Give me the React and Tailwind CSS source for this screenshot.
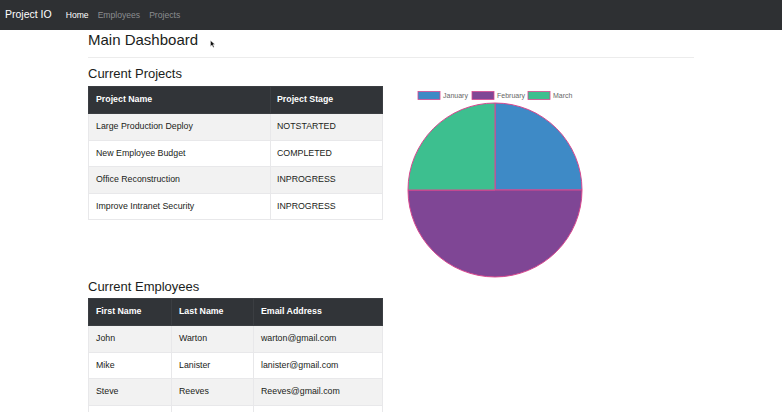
import React from 'react'

const projects = [
  { name: 'Large Production Deploy', stage: 'NOTSTARTED' },
  { name: 'New Employee Budget', stage: 'COMPLETED' },
  { name: 'Office Reconstruction', stage: 'INPROGRESS' },
  { name: 'Improve Intranet Security', stage: 'INPROGRESS' },
]

const employees = [
  { first: 'John', last: 'Warton', email: 'warton@gmail.com' },
  { first: 'Mike', last: 'Lanister', email: 'lanister@gmail.com' },
  { first: 'Steve', last: 'Reeves', email: 'Reeves@gmail.com' },
]

function PieChart() {
  const cx = 98
  const cy = 104
  const r = 87
  return (
    <svg width="196" height="196" viewBox="0 0 196 196" className="block">
      <g fontFamily="'Liberation Sans', Arial, sans-serif" fontSize="7" fill="#666">
        <rect x="21" y="5.5" width="22" height="8" fill="#3e8ac6" stroke="#d9488f" strokeWidth="0.8" />
        <text x="46" y="12">January</text>
        <rect x="75" y="5.5" width="22" height="8" fill="#7f4695" stroke="#d9488f" strokeWidth="0.8" />
        <text x="100" y="12">February</text>
        <rect x="131" y="5.5" width="22" height="8" fill="#3dbf8f" stroke="#d9488f" strokeWidth="0.8" />
        <text x="156" y="12">March</text>
      </g>
      <g stroke="#d9488f" strokeWidth="1">
        <path d={`M${cx},${cy} L${cx},${cy - r} A${r},${r} 0 0 1 ${cx + r},${cy} Z`} fill="#3e8ac6" />
        <path d={`M${cx},${cy} L${cx + r},${cy} A${r},${r} 0 0 1 ${cx - r},${cy} Z`} fill="#7f4695" />
        <path d={`M${cx},${cy} L${cx - r},${cy} A${r},${r} 0 0 1 ${cx},${cy - r} Z`} fill="#3dbf8f" />
      </g>
    </svg>
  )
}

function Cursor() {
  return (
    <svg width="6" height="8" viewBox="0 0 6 8" className="absolute left-[210px] top-[40px]">
      <path d="M0.5,0.5 L0.5,6.5 L2,5 L3.2,7.5 L4.2,7 L3,4.6 L5,4.6 Z" fill="#111" stroke="#fff" strokeWidth="0.4" />
    </svg>
  )
}

export default function App() {
  return (
    <div className="relative w-[782px] h-[412px] overflow-hidden bg-white text-[#1a1d20]" style={{ fontFamily: "'Liberation Sans', Arial, sans-serif" }}>
      {/* Navbar */}
      <nav className="h-[30px] bg-[#2e3033] flex items-center px-[5px]">
        <span className="text-white text-[10.5px] mr-[14px]">Project IO</span>
        <div className="flex gap-[9px] text-[8.6px]">
          <span className="text-white">Home</span>
          <span className="text-[#8b8d90]">Employees</span>
          <span className="text-[#8b8d90]">Projects</span>
        </div>
      </nav>

      <Cursor />

      <main className="ml-[88px] w-[606px]">
        <h2 className="text-[15px] leading-[18px] mt-[1px]">Main Dashboard</h2>
        <hr className="mt-[8px] border-t border-[#ececec]" />

        <div className="flex">
          <div className="w-[295px]">
            <h4 className="text-[13px] leading-[16px] mt-[8px] mb-[4px]">Current Projects</h4>
            <table className="w-full border-collapse text-[8.8px]">
              <thead>
                <tr className="bg-[#313438] text-white h-[27px]">
                  <th className="text-left font-bold px-[7px] w-[182px] border border-[#3b3e42]">Project Name</th>
                  <th className="text-left font-bold px-[6px] border border-[#3b3e42]">Project Stage</th>
                </tr>
              </thead>
              <tbody>
                {projects.map((p, i) => (
                  <tr key={p.name} className={`h-[26.5px] ${i % 2 === 0 ? 'bg-[#f2f2f2]' : 'bg-white'}`}>
                    <td className="px-[7px] border border-[#e8e8ea]">{p.name}</td>
                    <td className="px-[6px] border border-[#e8e8ea]">{p.stage}</td>
                  </tr>
                ))}
              </tbody>
            </table>
          </div>
          <div className="ml-[14px] mt-[28px]">
            <PieChart />
          </div>
        </div>

        <div className="w-[295px]">
          <h4 className="text-[13px] leading-[16px] -mt-[3px] mb-[3px]">Current Employees</h4>
          <table className="w-full border-collapse text-[8.8px]">
            <thead>
              <tr className="bg-[#313438] text-white h-[27px]">
                <th className="text-left font-bold px-[7px] w-[83px] border border-[#3b3e42]">First Name</th>
                <th className="text-left font-bold px-[7px] w-[82px] border border-[#3b3e42]">Last Name</th>
                <th className="text-left font-bold px-[7px] border border-[#3b3e42]">Email Address</th>
              </tr>
            </thead>
            <tbody>
              {employees.map((e, i) => (
                <tr key={e.email} className={`h-[26.5px] ${i % 2 === 0 ? 'bg-[#f2f2f2]' : 'bg-white'}`}>
                  <td className="px-[7px] border border-[#e8e8ea]">{e.first}</td>
                  <td className="px-[7px] border border-[#e8e8ea]">{e.last}</td>
                  <td className="px-[7px] border border-[#e8e8ea]">{e.email}</td>
                </tr>
              ))}
              <tr className="h-[26.5px] bg-white">
                <td className="border border-[#e8e8ea]" />
                <td className="border border-[#e8e8ea]" />
                <td className="border border-[#e8e8ea]" />
              </tr>
            </tbody>
          </table>
        </div>
      </main>
    </div>
  )
}
